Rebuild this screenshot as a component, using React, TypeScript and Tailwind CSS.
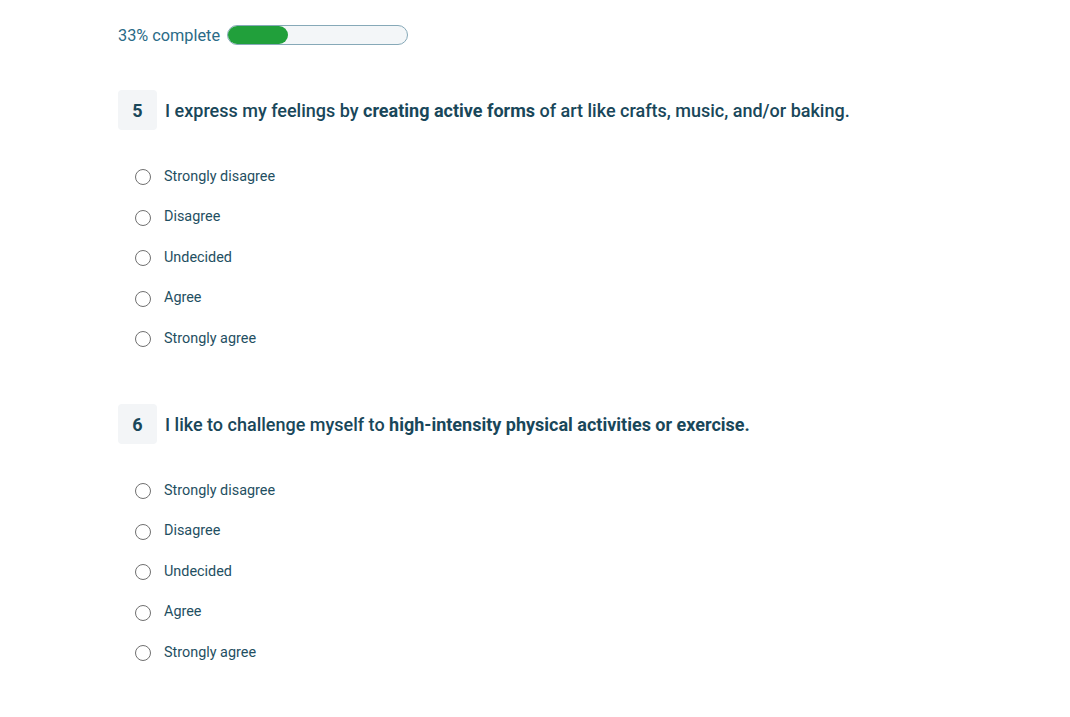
import React from "react";

const options = ["Strongly disagree", "Disagree", "Undecided", "Agree", "Strongly agree"];

function Radio({ label }: { label: string }) {
  return (
    <label className="flex items-center h-[40.5px] cursor-pointer">
      <span className="ml-[17px] w-[16px] h-[16px] rounded-full border-[1.5px] border-[#707070] bg-white shrink-0" />
      <span className="ml-[13px] text-[14.4px] text-[#1f4f62] leading-none">{label}</span>
    </label>
  );
}

function Question({ num, children }: { num: number; children: React.ReactNode }) {
  return (
    <div className="flex flex-col">
      <div className="flex items-center">
        <div className="w-[39px] h-[40px] rounded-[4px] bg-[#f3f5f7] flex items-center justify-center text-[18px] font-bold text-[#19475a]">
          {num}
        </div>
        <div className="ml-[8px] text-[18px] leading-[24px] font-medium text-[#19475a] pt-[1px]">{children}</div>
      </div>
      <div className="mt-[26.75px] flex flex-col">
        {options.map((o) => (
          <Radio key={o} label={o} />
        ))}
      </div>
    </div>
  );
}

export default function App() {
  return (
    <div className="min-h-[717px] w-[1070px] bg-white pl-[118px] pt-[25px]" style={{ fontFamily: "Roboto, 'Noto Sans', sans-serif" }}>
      <div className="flex items-center h-[20px]">
        <span className="text-[16.3px] text-[#2a6b87] pt-[3px]">33% complete</span>
        <div className="ml-[7px] w-[181px] h-[20px] rounded-full border border-[#86a9b8] bg-[#f3f6f8] p-0">
          <div className="h-full w-[60px] rounded-full bg-[#21a03b]" />
        </div>
      </div>
      <div className="mt-[45px]">
        <Question num={5}>
          I express my feelings by <span className="font-bold">creating active forms</span> of art like crafts, music, and/or baking.
        </Question>
      </div>
      <div className="mt-[44.75px]">
        <Question num={6}>
          I like to challenge myself to <span className="font-bold">high-intensity physical activities or exercise.</span>
        </Question>
      </div>
    </div>
  );
}
